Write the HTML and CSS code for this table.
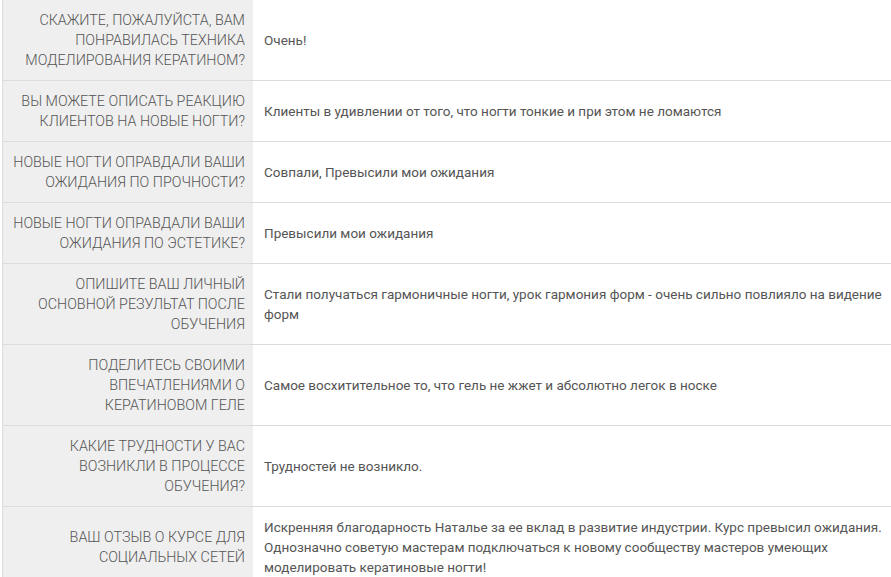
FILE: index.html
```html
<!DOCTYPE html>
<html>
<head>
  <meta charset="utf-8">
  <link rel="stylesheet" href="styles.css">
</head>
<body>
  <div class="survey">
    <table class="answers">
      <tr>
        <th>Скажите, пожалуйста, вам понравилась техника моделирования кератином?</th>
        <td>Очень!</td>
      </tr>
      <tr>
        <th>Вы можете описать реакцию клиентов на новые ногти?</th>
        <td>Клиенты в удивлении от того, что ногти тонкие и при этом не ломаются</td>
      </tr>
      <tr>
        <th>Новые ногти оправдали ваши ожидания по прочности?</th>
        <td>Совпали, Превысили мои ожидания</td>
      </tr>
      <tr>
        <th>Новые ногти оправдали ваши ожидания по эстетике?</th>
        <td>Превысили мои ожидания</td>
      </tr>
      <tr>
        <th>Опишите ваш личный основной результат после обучения</th>
        <td>Стали получаться гармоничные ногти, урок гармония форм - очень сильно повлияло на видение форм</td>
      </tr>
      <tr>
        <th>Поделитесь своими впечатлениями о кератиновом геле</th>
        <td>Самое восхитительное то, что гель не жжет и абсолютно легок в носке</td>
      </tr>
      <tr>
        <th>Какие трудности у вас возникли в процессе обучения?</th>
        <td>Трудностей не возникло.</td>
      </tr>
      <tr>
        <th>Ваш отзыв о курсе для социальных сетей</th>
        <td>Искренняя благодарность Наталье за ее вклад в развитие индустрии. Курс превысил ожидания. Однозначно советую мастерам подключаться к новому сообществу мастеров умеющих моделировать кератиновые ногти!</td>
      </tr>
    </table>
  </div>
</body>
</html>
```

FILE: styles.css
```css
body {
  margin: 0;
  background: white;
  font-family: Roboto, "Open Sans", sans-serif;
  color: #555;
}

.survey {
  padding-left: 2px;
  width: 895px;
}

.answers {
  width: 100%;
  border-collapse: collapse;
  border-left: 1px solid #dcdcdc;
}

.answers tr {
  border-bottom: 1px solid #dcdcdc;
}

.answers th {
  width: 238px;
  padding: 10px 8px 10px 4px;
  background: #efefef;
  font-weight: 300;
  font-size: 14.3px;
  line-height: 20px;
  text-transform: uppercase;
  text-align: right;
  vertical-align: middle;
}

.answers td {
  padding: 10px 10px 10px 11px;
  font-size: 13.5px;
  line-height: 20px;
  vertical-align: middle;
}
```
